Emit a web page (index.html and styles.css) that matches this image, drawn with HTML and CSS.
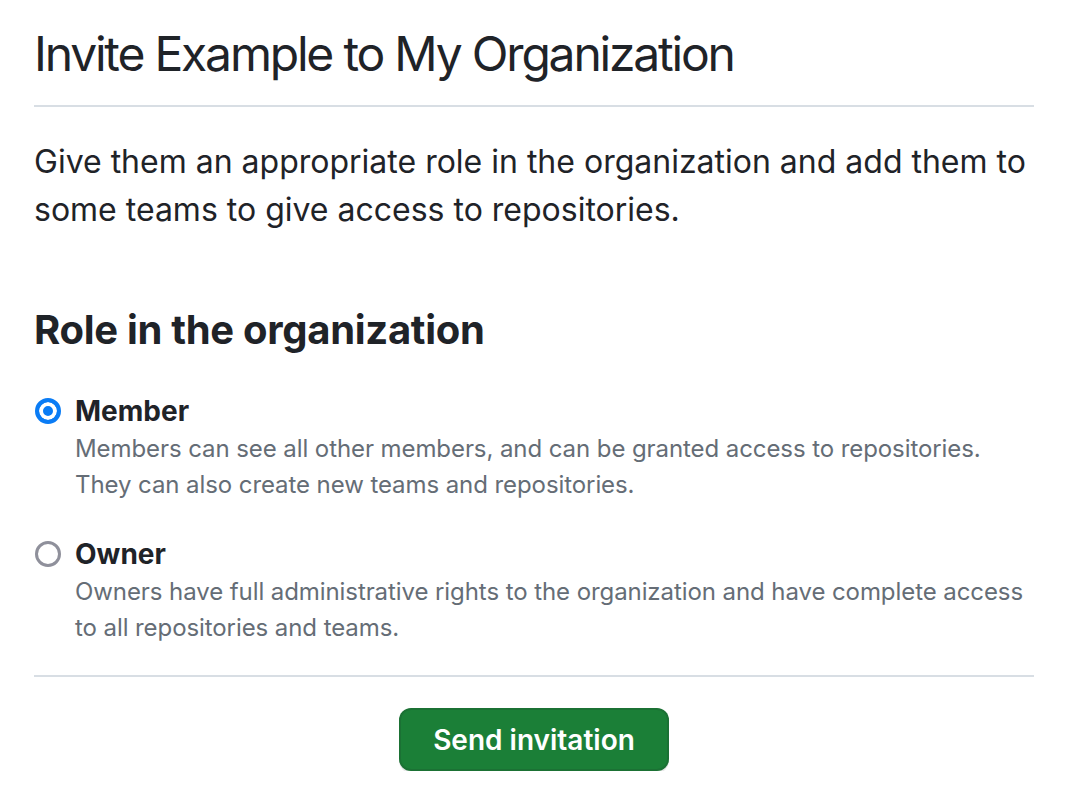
FILE: index.html
```html
<!DOCTYPE html>
<html lang="en">
<head>
<meta charset="utf-8">
<title>Invite Example to My Organization</title>
<link rel="stylesheet" href="styles.css">
</head>
<body>
<main class="page">
  <div class="subhead">
    <h1 class="subhead-title">Invite Example to My Organization</h1>
  </div>
  <p class="lead">Give them an appropriate role in the organization and add them to some teams to give access to repositories.</p>

  <h2 class="section-title">Role in the organization</h2>

  <div class="role-option">
    <label class="role-label">
      <input class="radio" type="radio" name="role" value="member" checked>
      <span>Member</span>
    </label>
    <p class="role-note">Members can see all other members, and can be granted access to repositories. They can also create new teams and repositories.</p>
  </div>

  <div class="role-option">
    <label class="role-label">
      <input class="radio" type="radio" name="role" value="owner">
      <span>Owner</span>
    </label>
    <p class="role-note">Owners have full administrative rights to the organization and have complete access to all repositories and teams.</p>
  </div>

  <div class="form-actions">
    <button class="btn-primary" type="button">Send invitation</button>
  </div>
</main>
</body>
</html>
```

FILE: styles.css
```css
* { box-sizing: border-box; }

html, body {
  margin: 0;
  padding: 0;
  background: #ffffff;
}

body {
  font-family: Inter, "Noto Sans", "Liberation Sans", sans-serif;
  color: #1f2328;
}

.page {
  width: 1000px;
  margin-left: 34px;
}

.subhead {
  padding-top: 24px;
  padding-bottom: 21px;
  border-bottom: 2px solid #d8dee4;
}

.subhead-title {
  margin: 0;
  font-size: 48px;
  font-weight: 400;
  line-height: 60px;
  letter-spacing: -2.2px;
}

.lead {
  margin: 31px 0 0;
  font-size: 32px;
  line-height: 48px;
  padding-right: 6px;
}

.section-title {
  margin: 71px 0 0;
  font-size: 40px;
  font-weight: 700;
  line-height: 50px;
  letter-spacing: -0.3px;
}

.role-option {
  margin-top: 36px;
}

.role-option + .role-option {
  margin-top: 31px;
}

.role-label {
  display: flex;
  align-items: center;
  gap: 14px;
  font-size: 28px;
  font-weight: 700;
  line-height: 40px;
  padding-left: 1px;
}

.radio {
  appearance: none;
  -webkit-appearance: none;
  margin: 0;
  width: 26px;
  height: 26px;
  border-radius: 50%;
  border: 3px solid #8f909b;
  background: #ffffff;
  flex: none;
}

.radio:checked {
  border: 4px solid #0a7cf5;
  background: #0a7cf5;
  box-shadow: inset 0 0 0 4px #ffffff;
}

.role-note {
  margin: 0;
  padding-left: 41px;
  font-size: 24px;
  line-height: 36px;
  color: #656d76;
  letter-spacing: -0.08px;
}

.form-actions {
  margin-top: 29px;
  border-top: 2px solid #d8dee4;
  padding-top: 31px;
  display: flex;
  justify-content: center;
}

.btn-primary {
  height: 63px;
  padding: 0 32px;
  border: 2px solid rgba(31, 35, 40, 0.15);
  border-radius: 12px;
  background: #1b7f37;
  color: #ffffff;
  font-family: Inter, "Noto Sans", "Liberation Sans", sans-serif;
  font-size: 28px;
  font-weight: 600;
  box-shadow: 0 2px 0 rgba(31, 35, 40, 0.1);
}
```
